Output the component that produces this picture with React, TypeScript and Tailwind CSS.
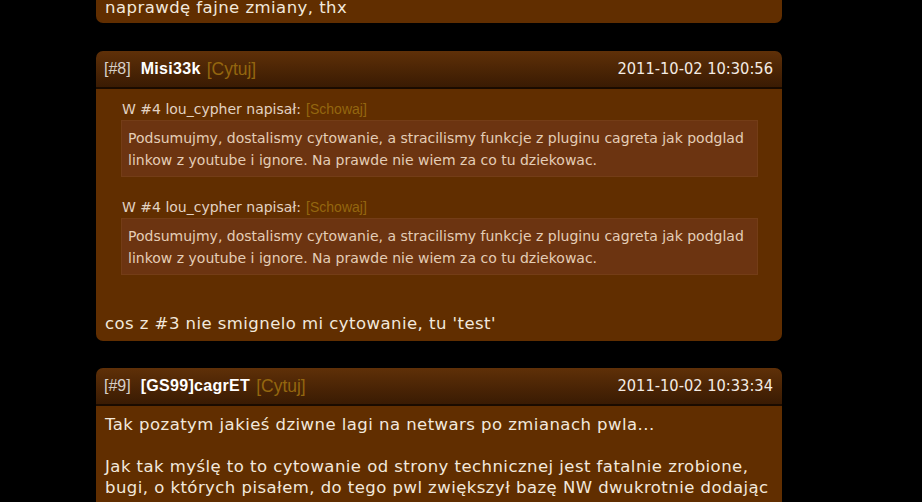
import React from "react";

const body = { fontFamily: '"DejaVu Sans", Verdana, sans-serif' };
const cond = { fontFamily: '"DejaVu Sans Condensed", "DejaVu Sans", sans-serif' };
const arial = { fontFamily: '"Liberation Sans", Arial, sans-serif' };

function Header({ num, nick, date }: { num: string; nick: string; date: string }) {
  return (
    <div className="flex h-[36px] items-center justify-between rounded-t-[7px] bg-gradient-to-b from-[#5f3008] to-[#3a1b03] pl-[8px] pr-[9px]">
      <div className="flex items-center text-[16px]" style={arial}>
        <span className="text-[#d6cfc8]">[#{num}]</span>
        <span className="ml-[10px] font-bold tracking-[0.3px] text-white">{nick}</span>
        <span className="ml-[6px] text-[17.5px] text-[#94660f]">[Cytuj]</span>
      </div>
      <div className="text-[16.3px] text-[#f4ece4]" style={cond}>
        {date}
      </div>
    </div>
  );
}

function Quote({ mt }: { mt: string }) {
  return (
    <div className={mt}>
      <div className="ml-[26px] flex items-center text-[14px] leading-[18px] text-[#e2d2c2]" style={body}>
        <span>W #4 lou_cypher napisał:</span>
        <span className="ml-[5px] text-[14px] text-[#94660f]" style={arial}>
          [Schowaj]
        </span>
      </div>
      <div
        className="ml-[25px] mr-[24px] mt-[2px] border border-[#743d17] bg-[#6c3411] pb-[5px] pl-[6px] pt-[6px] text-[14px] leading-[22px] text-[#e4cdb6]"
        style={body}
      >
        Podsumujmy, dostalismy cytowanie, a stracilismy funkcje z pluginu cagreta jak podglad
        <br />
        linkow z youtube i ignore. Na prawde nie wiem za co tu dziekowac.
      </div>
    </div>
  );
}

export default function App() {
  return (
    <div className="h-[502px] w-[922px] overflow-hidden bg-black pl-[96px]">
      <div className="w-[686px]">
        <div
          className="-mt-[3px] rounded-b-[7px] bg-[#612e00] pb-[4px] pl-[9px] text-[16.5px] leading-[22px] tracking-[0.45px] text-[#f2e8dc]"
          style={body}
        >
          naprawdę fajne zmiany, thx
        </div>

        <div className="mt-[28px]">
          <Header num="8" nick="Misi33k" date="2011-10-02 10:30:56" />
          <div className="h-[2px] bg-[#1a0b00]" />
          <div className="rounded-b-[7px] bg-[#612e00] pb-[6px] pt-[11px]">
            <Quote mt="" />
            <Quote mt="mt-[21px]" />
            <div
              className="mt-[38px] pl-[9px] text-[16.5px] leading-[22px] tracking-[0.45px] text-[#f2e8dc]"
              style={body}
            >
              cos z #3 nie smignelo mi cytowanie, tu 'test'
            </div>
          </div>
        </div>

        <div className="mt-[27px]">
          <Header num="9" nick="[GS99]cagrET" date="2011-10-02 10:33:34" />
          <div className="h-[2px] bg-[#1a0b00]" />
          <div
            className="h-[200px] bg-[#612e00] pl-[9px] pt-[7.5px] text-[16.5px] leading-[21px] tracking-[0.45px] text-[#f2e8dc]"
            style={body}
          >
            <div>Tak pozatym jakieś dziwne lagi na netwars po zmianach pwla...</div>
            <div className="h-[21px]" />
            <div>Jak tak myślę to to cytowanie od strony technicznej jest fatalnie zrobione,</div>
            <div>bugi, o których pisałem, do tego pwl zwiększył bazę NW dwukrotnie dodając</div>
          </div>
        </div>
      </div>
    </div>
  );
}
